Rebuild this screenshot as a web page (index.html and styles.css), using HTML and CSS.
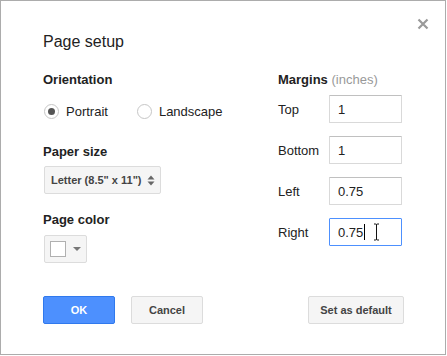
FILE: index.html
```html
<!DOCTYPE html>
<html lang="en">
<head>
  <meta charset="UTF-8" />
  <title>Page setup</title>
  <link rel="stylesheet" href="styles.css">
</head>
<body>

  <div class="dialog">
    <button class="close" aria-label="Close">
      <svg width="12" height="12" viewBox="0 0 12 12"><path d="M1.5 1.5 L10.5 10.5 M10.5 1.5 L1.5 10.5" stroke="#9a9a9a" stroke-width="2.2" fill="none"/></svg>
    </button>

    <h1 class="title">Page setup</h1>

    <div class="columns">
      <div class="col-left">
        <h2 class="section">Orientation</h2>
        <div class="radios">
          <label class="radio"><span class="radio-dot checked"></span>Portrait</label>
          <label class="radio"><span class="radio-dot"></span>Landscape</label>
        </div>

        <h2 class="section paper-label">Paper size</h2>
        <div class="select">
          <span>Letter (8.5" x 11")</span>
          <svg class="select-arrows" width="8" height="11" viewBox="0 0 8 11"><path d="M0.5 4.5 L4 0.5 L7.5 4.5Z M0.5 6.5 L4 10.5 L7.5 6.5Z" fill="#666"/></svg>
        </div>

        <h2 class="section color-label">Page color</h2>
        <div class="color-btn">
          <span class="swatch"></span>
          <svg width="8" height="4" viewBox="0 0 8 4"><path d="M0 0 L8 0 L4 4Z" fill="#777"/></svg>
        </div>
      </div>

      <div class="col-right">
        <h2 class="section">Margins <span class="hint">(inches)</span></h2>
        <div class="margin-rows">
          <div class="margin-row"><label>Top</label><input class="field" type="text" value="1"></div>
          <div class="margin-row"><label>Bottom</label><input class="field" type="text" value="1"></div>
          <div class="margin-row"><label>Left</label><input class="field" type="text" value="0.75"></div>
          <div class="margin-row">
            <label>Right</label>
            <span class="field-wrap">
              <input class="field focused" type="text" value="0.75">
              <span class="text-caret"></span>
              <svg class="ibeam" width="7" height="18" viewBox="0 0 7 18"><path d="M1 1 H2.5 Q3.5 1 3.5 2 Q3.5 1 4.5 1 H6 M3.5 2 V16 M1 17 H2.5 Q3.5 17 3.5 16 Q3.5 17 4.5 17 H6" stroke="#111" stroke-width="1" fill="none"/></svg>
            </span>
          </div>
        </div>
      </div>
    </div>

    <div class="footer">
      <button class="btn btn-primary">OK</button>
      <button class="btn">Cancel</button>
      <button class="btn btn-default">Set as default</button>
    </div>
  </div>

</body>
</html>
```

FILE: styles.css
```css
* { box-sizing: border-box; }
body { margin: 0; font-family: "Liberation Sans", Arial, sans-serif; color: #222; background: #fff; }

.dialog { position: relative; width: 446px; height: 355px; padding: 31px 41px 0 42px; background: #fff; border: 1px solid #acacac; }
.close { position: absolute; top: 17px; right: 16px; width: 12px; height: 12px; padding: 0; border: none; background: none; cursor: pointer; }
.close svg { display: block; }

.title { margin: 0; font-size: 16px; font-weight: normal; line-height: 20px; color: #222; }

.columns { display: grid; grid-template-columns: 235px auto; margin-top: 20px; }
.section { margin: 0; font-size: 13px; font-weight: bold; line-height: 16px; color: #222; }
.hint { font-weight: normal; color: #999; }

.radios { display: flex; align-items: center; gap: 29px; height: 20px; margin-top: 13px; margin-left: 1px; }
.radio { display: flex; align-items: center; gap: 7px; font-size: 13px; }
.radio-dot { position: relative; width: 15px; height: 15px; border: 1px solid #c6c6c6; border-radius: 50%; background: #fff; }
.radio-dot.checked::after { content: ""; position: absolute; left: 3px; top: 3px; width: 7px; height: 7px; border-radius: 50%; background: #555; }

.paper-label { margin-top: 23px; }
.select { display: flex; align-items: center; justify-content: space-between; width: 117px; height: 28px; margin: 6px 0 0 1px; padding: 0 5px 0 6px; font-size: 11px; font-weight: bold; color: #444; background: #f5f5f5; border: 1px solid #dcdcdc; border-radius: 2px; }
.select-arrows { display: block; }

.color-label { margin-top: 18px; }
.color-btn { display: flex; align-items: center; gap: 7px; width: 43px; height: 28px; margin: 7px 0 0 1px; padding-left: 5px; background: #f5f5f5; border: 1px solid #dcdcdc; border-radius: 2px; }
.swatch { width: 16px; height: 16px; background: #fff; border: 1px solid #b0b0b0; }

.margin-rows { display: flex; flex-direction: column; gap: 13px; margin-top: 7px; }
.margin-row { display: flex; align-items: center; font-size: 13px; }
.margin-row label { width: 51px; }
.field { width: 73px; height: 28px; padding: 0 0 0 8px; font-family: inherit; font-size: 13px; color: #222; background: #fff; border: 1px solid #d9d9d9; border-top-color: #c0c0c0; border-radius: 1px; outline: none; }
.field.focused { border-color: #4d90fe; }
.field-wrap { position: relative; display: block; }
.text-caret { position: absolute; left: 35px; top: 6px; width: 1px; height: 16px; background: #000; }
.ibeam { position: absolute; left: 44px; top: 5px; }

.footer { display: flex; gap: 16px; margin-top: 33px; }
.btn { height: 28px; min-width: 72px; padding: 0 8px; font-family: inherit; font-size: 11px; font-weight: bold; color: #444; background: #f5f5f5; border: 1px solid #dcdcdc; border-radius: 2px; cursor: pointer; }
.btn-primary { color: #fff; background: #4d90fe; border-color: #3079ed; }
.btn-default { width: 96px; margin-left: auto; }
```
